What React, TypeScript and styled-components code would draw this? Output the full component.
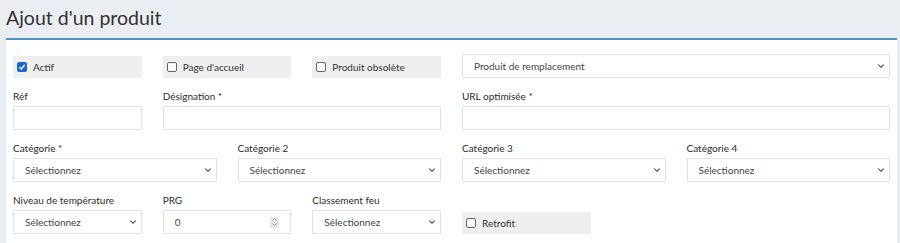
import React from 'react';
import styled, { createGlobalStyle } from 'styled-components';

const GlobalStyle = createGlobalStyle`
  html, body {
    margin: 0;
    padding: 0;
    background: #eaedf1;
    font-family: Lato, "Noto Sans", Arial, sans-serif;
    color: #333;
  }
  * {
    box-sizing: border-box;
  }
`;

const Page = styled.div`
  width: 900px;
  height: 243px;
  overflow: hidden;
`;

const Title = styled.h1`
  margin: 0;
  padding: 6px 0 0 6px;
  height: 38px;
  font-size: 19.5px;
  font-weight: 400;
  line-height: 23px;
  color: #333;
`;

const Card = styled.div`
  margin: 0 3px 0 6px;
  min-height: 220px;
  background: #fff;
  border-top: 2px solid #4d94c5;
  padding: 14px 7px;
`;

const Row = styled.div`
  display: grid;
  grid-template-columns: repeat(12, 1fr);
  column-gap: 21px;
  margin-bottom: 11px;
`;

const Field = styled.div<{ span: number }>`
  grid-column: span ${p => p.span};
  display: flex;
  flex-direction: column;
  justify-content: flex-end;
  min-width: 0;
`;

const Label = styled.label`
  font-size: 10px;
  line-height: 14px;
  color: #2b2b2b;
  margin-bottom: 3px;
`;

const CheckBox = styled.label`
  display: flex;
  align-items: center;
  gap: 6px;
  height: 22px;
  padding-left: 4px;
  background: #efefef;
  font-size: 10px;
  color: #333;
`;

const Box = styled.span<{ checked?: boolean }>`
  display: inline-flex;
  align-items: center;
  justify-content: center;
  width: 10px;
  height: 10px;
  border-radius: 2px;
  border: 1px solid ${p => (p.checked ? '#1a66d2' : '#666')};
  background: ${p => (p.checked ? '#1a66d2' : '#fff')};
`;

const TextInput = styled.input`
  height: 24px;
  width: 100%;
  border: 1px solid #dfe3e8;
  border-radius: 0;
  padding: 0 12px;
  font: inherit;
  font-size: 10px;
  outline: none;
`;

const SelectWrap = styled.div`
  display: flex;
  align-items: center;
  justify-content: space-between;
  height: 24px;
  border: 1px solid #dfe3e8;
  padding: 0 4px 0 11px;
  font-size: 10px;
  color: #444;
`;

const NumberWrap = styled.div`
  display: flex;
  align-items: center;
  justify-content: space-between;
  height: 24px;
  border: 1px solid #dfe3e8;
  padding: 0 11px 0 11px;
  font-size: 10px;
  color: #444;
`;

const Spinner = styled.span`
  display: flex;
  align-items: center;
  justify-content: center;
  width: 9px;
  height: 11px;
  background: #e6e6e6;
  border-radius: 1px;
`;

const Chevron = () => (
  <svg width="8" height="6" viewBox="0 0 8 6">
    <path d="M1.3 1.6 L4 4.2 L6.7 1.6" fill="none" stroke="#555" strokeWidth="1.2" />
  </svg>
);

const Select: React.FC<{ value: string }> = ({ value }) => (
  <SelectWrap>
    <span>{value}</span>
    <Chevron />
  </SelectWrap>
);

const Check: React.FC<{ label: string; checked?: boolean }> = ({ label, checked }) => (
  <CheckBox>
    <Box checked={checked}>
      {checked && (
        <svg width="8" height="8" viewBox="0 0 8 8">
          <path d="M1.3 4.2 L3.2 6 L6.7 1.9" fill="none" stroke="#fff" strokeWidth="1.4" />
        </svg>
      )}
    </Box>
    {label}
  </CheckBox>
);

export default function App() {
  return (
    <Page>
      <GlobalStyle />
      <Title>Ajout d'un produit</Title>
      <Card>
        <Row>
          <Field span={2}><Check label="Actif" checked /></Field>
          <Field span={2}><Check label="Page d'accueil" /></Field>
          <Field span={2}><Check label="Produit obsolète" /></Field>
          <Field span={6}><Select value="Produit de remplacement" /></Field>
        </Row>
        <Row>
          <Field span={2}>
            <Label>Réf</Label>
            <TextInput />
          </Field>
          <Field span={4}>
            <Label>Désignation *</Label>
            <TextInput />
          </Field>
          <Field span={6}>
            <Label>URL optimisée *</Label>
            <TextInput />
          </Field>
        </Row>
        <Row>
          {['Catégorie *', 'Catégorie 2', 'Catégorie 3', 'Catégorie 4'].map(l => (
            <Field span={3} key={l}>
              <Label>{l}</Label>
              <Select value="Sélectionnez" />
            </Field>
          ))}
        </Row>
        <Row>
          <Field span={2}>
            <Label>Niveau de température</Label>
            <Select value="Sélectionnez" />
          </Field>
          <Field span={2}>
            <Label>PRG</Label>
            <NumberWrap>
              <span>0</span>
              <Spinner>
                <svg width="7" height="10" viewBox="0 0 7 10">
                  <path d="M1.5 3.5 L3.5 1.5 L5.5 3.5 M1.5 6.5 L3.5 8.5 L5.5 6.5" fill="none" stroke="#999" strokeWidth="0.9" />
                </svg>
              </Spinner>
            </NumberWrap>
          </Field>
          <Field span={2}>
            <Label>Classement feu</Label>
            <Select value="Sélectionnez" />
          </Field>
          <Field span={2}>
            <Check label="Retrofit" />
          </Field>
        </Row>
      </Card>
    </Page>
  );
}
